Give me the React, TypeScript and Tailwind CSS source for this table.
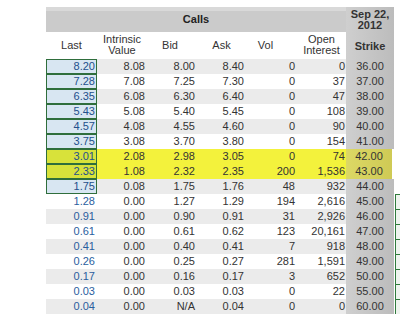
const rows: (string | number)[][] = [
  ['8.20', '8.08', '8.00', '8.40', '0', '0', '36.00'],
  ['7.28', '7.08', '7.25', '7.30', '0', '37', '37.00'],
  ['6.35', '6.08', '6.30', '6.40', '0', '47', '38.00'],
  ['5.43', '5.08', '5.40', '5.45', '0', '108', '39.00'],
  ['4.57', '4.08', '4.55', '4.60', '0', '90', '40.00'],
  ['3.75', '3.08', '3.70', '3.80', '0', '154', '41.00'],
  ['3.01', '2.08', '2.98', '3.05', '0', '74', '42.00'],
  ['2.33', '1.08', '2.32', '2.35', '200', '1,536', '43.00'],
  ['1.75', '0.08', '1.75', '1.76', '48', '932', '44.00'],
  ['1.28', '0.00', '1.27', '1.29', '194', '2,616', '45.00'],
  ['0.91', '0.00', '0.90', '0.91', '31', '2,926', '46.00'],
  ['0.61', '0.00', '0.61', '0.62', '123', '20,161', '47.00'],
  ['0.41', '0.00', '0.40', '0.41', '7', '918', '48.00'],
  ['0.26', '0.00', '0.25', '0.27', '281', '1,591', '49.00'],
  ['0.17', '0.00', '0.16', '0.17', '3', '652', '50.00'],
  ['0.03', '0.00', '0.03', '0.03', '0', '22', '55.00'],
  ['0.04', '0.00', 'N/A', '0.04', '0', '0', '60.00'],
];

const ITM_CALLS = 9; // rows 36..44 are in the money for calls
const HIGHLIGHT = [6, 7];

export default function App() {
  return (
    <div className="w-[400px] h-[314px] overflow-hidden bg-white pt-[7px] pl-[46px] font-['Liberation_Sans',Arial,sans-serif] text-[11px] leading-none text-[#333]">
      <div className="grid grid-cols-[51px_50px_50px_49px_51px_49px_48px_6px]">
        {/* top band */}
        <div className="col-span-6 h-[25px] flex flex-col bg-[#cbcbcb]">
          <div className="h-[4px] bg-[#d9d9d9]" />
          <div className="flex-1 flex items-center justify-center pb-[4px] font-bold text-[#222]">
            Calls
          </div>
        </div>
        <div className="row-span-2 bg-gradient-to-r from-[#cfcfcf] to-[#bcbcbc] flex flex-col items-center font-bold text-[#333]">
          <div className="pt-[2px] text-center leading-[11px]">
            Sep 22,
            <br />
            2012
          </div>
          <div className="mt-[10px]">Strike</div>
        </div>
        <div className="row-span-2 bg-white" />

        {/* column headers */}
        <div className="h-[27px] flex items-center justify-center pb-[1px]">Last</div>
        <div className="h-[27px] flex items-center justify-center text-center leading-[11px] pb-[1px]">
          Intrinsic
          <br />
          Value
        </div>
        <div className="h-[27px] flex items-center justify-center pr-[4px] pb-[1px]">Bid</div>
        <div className="h-[27px] flex items-center justify-center pb-[1px]">Ask</div>
        <div className="h-[27px] flex items-center justify-center pr-[12px] pb-[1px]">Vol</div>
        <div className="h-[27px] flex items-center justify-center text-center leading-[11px] pb-[1px]">
          Open
          <br />
          Interest
        </div>

        {rows.map((r, i) => {
          const hl = HIGHLIGHT.includes(i);
          const stripe = hl ? 'bg-[#f3f23c]' : i % 2 === 0 ? 'bg-[#ebebeb]' : 'bg-white';
          const itm = i < ITM_CALLS;
          return [
            <div key={`l${i}`} className={`h-[15px] ${itm ? '' : stripe}`}>
              {itm ? (
                <div
                  className={`h-[15px] border border-[#2f6e3c] flex items-center justify-end pr-[1px] text-[#23508c] ${
                    hl ? 'bg-[#d8e23a] text-[#2b4a5c]' : 'bg-[#d8e6f2]'
                  }`}
                >
                  {r[0]}
                </div>
              ) : (
                <div className="h-[15px] flex items-center justify-end pr-[2px] text-[#2a5e9e]">{r[0]}</div>
              )}
            </div>,
            ...[1, 2, 3, 4, 5].map((c) => (
              <div
                key={`c${i}-${c}`}
                className={`h-[15px] flex items-center justify-end ${c === 5 ? 'pr-[1px]' : 'pr-[2px]'} ${stripe}`}
              >
                {r[c]}
              </div>
            )),
            <div
              key={`s${i}`}
              className={`h-[15px] flex items-center justify-center ${
                hl
                  ? 'bg-gradient-to-r from-[#dcd865] to-[#cfca55] mr-[2px]'
                  : 'bg-gradient-to-r from-[#cfcfcf] to-[#bcbcbc]'
              }`}
            >
              {r[6]}
            </div>,
            <div key={`p${i}`} className="h-[15px]">
              {i >= ITM_CALLS && (
                <div className="h-[15px] ml-[1px] border-l border-t border-[#2f7a3c] bg-[#eef4ee]" />
              )}
            </div>,
          ];
        })}
      </div>
    </div>
  );
}
